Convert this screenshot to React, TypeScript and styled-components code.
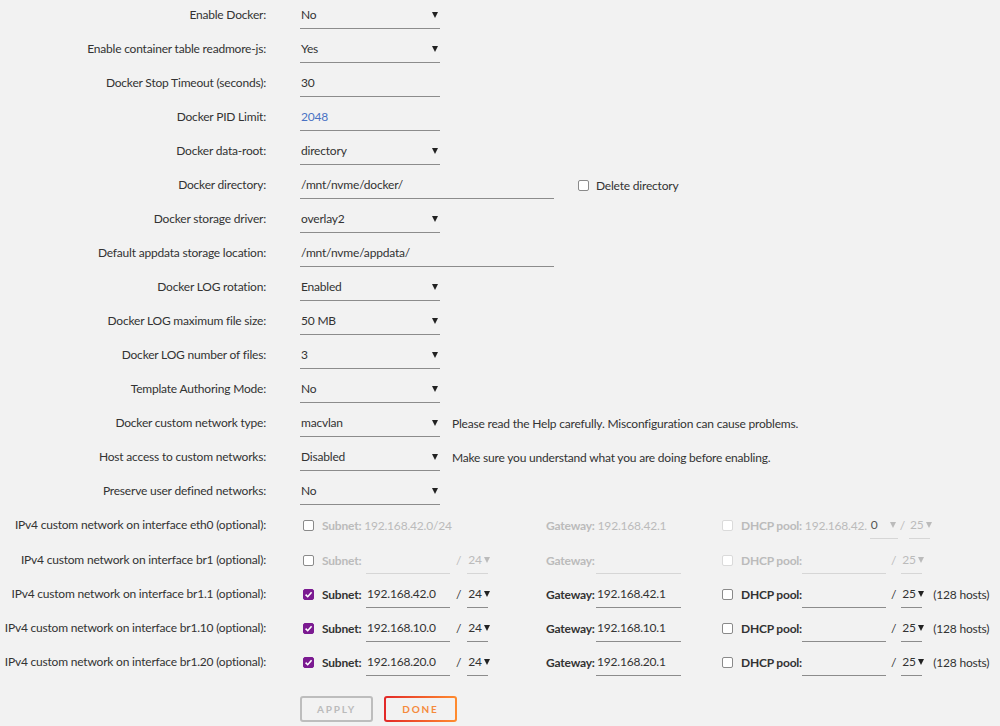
import React from "react";
import styled, { createGlobalStyle } from "styled-components";

const GlobalStyle = createGlobalStyle`
  body {
    margin: 0;
    background: #f2f2f2;
    font-family: Lato, "Liberation Sans", sans-serif;
    font-size: 12px;
    letter-spacing: -0.2px;
    color: #333;
  }
`;

const Form = styled.div`
  padding-top: 1px;
  width: 1000px;
`;

const Row = styled.div<{ $extra?: boolean }>`
  display: flex;
  align-items: flex-start;
  height: 34px;
  margin-top: ${(p) => (p.$extra ? "1px" : "0")};
`;

const Label = styled.div`
  flex: none;
  width: 266px;
  padding-right: 34px;
  text-align: right;
  line-height: 28px;
  white-space: nowrap;
`;

const Value = styled.div`
  display: flex;
  align-items: center;
  height: 28px;
`;

const Field = styled.div<{ $w: number; $muted?: boolean; $blue?: boolean }>`
  box-sizing: border-box;
  flex: none;
  width: ${(p) => p.$w}px;
  height: 28px;
  display: flex;
  align-items: center;
  justify-content: space-between;
  padding: 0 2px 0 1px;
  border-bottom: 1px solid ${(p) => (p.$muted ? "#d6d6d6" : "#8c8c8c")};
  color: ${(p) => (p.$blue ? "#4a72c4" : p.$muted ? "#bbb" : "#333")};
  white-space: nowrap;
`;

const Arrow = styled.span<{ $muted?: boolean }>`
  display: inline-block;
  width: 0;
  height: 0;
  border-left: 3px solid transparent;
  border-right: 3px solid transparent;
  border-top: 6px solid ${(p) => (p.$muted ? "#bbb" : "#222")};
  margin-left: 2px;
`;

const Note = styled.span`
  margin-left: 12px;
  white-space: nowrap;
`;

const Box = styled.span<{ $checked?: boolean; $muted?: boolean }>`
  box-sizing: border-box;
  width: 11px;
  height: 11px;
  border-radius: 2px;
  border: 1px solid ${(p) => (p.$checked ? "#7b1a91" : p.$muted ? "#dadada" : "#8a8a8a")};
  background: ${(p) => (p.$checked ? "#7b1a91" : "#fff")};
  display: inline-flex;
  align-items: center;
  justify-content: center;
  flex: none;
`;

const Check = ({ checked, muted }: { checked?: boolean; muted?: boolean }) => (
  <Box $checked={checked} $muted={muted}>
    {checked && (
      <svg width="9" height="9" viewBox="0 0 9 9">
        <path d="M1.6 4.6 L3.7 6.7 L7.6 2.2" stroke="#fff" strokeWidth="1.6" fill="none" />
      </svg>
    )}
  </Box>
);

const CheckLabel = styled.label`
  display: flex;
  align-items: center;
  gap: 7px;
  margin-left: 24px;
`;

const NetGrid = styled.div`
  display: grid;
  grid-template-columns: 246px 176px auto;
  align-items: center;
  height: 28px;
`;

const Group = styled.div<{ $muted?: boolean }>`
  display: flex;
  align-items: center;
  height: 28px;
  color: ${(p) => (p.$muted ? "#bbb" : "#333")};
  white-space: nowrap;
`;

const Bold = styled.span<{ $w?: number }>`
  font-weight: 700;
  ${(p) => (p.$w ? `width: ${p.$w}px;` : "")}
  flex: none;
`;

const Slash = styled.span<{ $l: number; $r: number }>`
  margin: 0 ${(p) => p.$r}px 0 ${(p) => p.$l}px;
`;

const CheckSlot = styled.span<{ $l: number }>`
  display: inline-flex;
  margin-left: ${(p) => p.$l}px;
  margin-right: 8px;
`;

const Hosts = styled.span`
  margin-left: 11px;
`;

const Buttons = styled.div`
  display: flex;
  gap: 11px;
  margin: 14px 0 0 300px;
`;

const Button = styled.button<{ $kind: "apply" | "done" }>`
  box-sizing: border-box;
  width: 73px;
  height: 26px;
  border-radius: 3px;
  font-family: Lato, "Liberation Sans", sans-serif;
  font-size: 10px;
  font-weight: 700;
  letter-spacing: 1.8px;
  text-transform: uppercase;
  cursor: pointer;
  border: 2px solid ${(p) => (p.$kind === "apply" ? "#bdbdbd" : "transparent")};
  color: ${(p) => (p.$kind === "apply" ? "#bbb" : "#f58a3c")};
  background: ${(p) =>
    p.$kind === "apply"
      ? "#f2f2f2"
      : "linear-gradient(#f2f2f2, #f2f2f2) padding-box, linear-gradient(90deg, #e22828, #ff8c2f) border-box"};
`;

type Item = {
  label: string;
  value: string;
  kind: "select" | "input";
  w?: number;
  blue?: boolean;
  note?: string;
  check?: string;
};

const items: Item[] = [
  { label: "Enable Docker:", value: "No", kind: "select" },
  { label: "Enable container table readmore-js:", value: "Yes", kind: "select" },
  { label: "Docker Stop Timeout (seconds):", value: "30", kind: "input" },
  { label: "Docker PID Limit:", value: "2048", kind: "input", blue: true },
  { label: "Docker data-root:", value: "directory", kind: "select" },
  { label: "Docker directory:", value: "/mnt/nvme/docker/", kind: "input", w: 254, check: "Delete directory" },
  { label: "Docker storage driver:", value: "overlay2", kind: "select" },
  { label: "Default appdata storage location:", value: "/mnt/nvme/appdata/", kind: "input", w: 254 },
  { label: "Docker LOG rotation:", value: "Enabled", kind: "select" },
  { label: "Docker LOG maximum file size:", value: "50 MB", kind: "select" },
  { label: "Docker LOG number of files:", value: "3", kind: "select" },
  { label: "Template Authoring Mode:", value: "No", kind: "select" },
  {
    label: "Docker custom network type:",
    value: "macvlan",
    kind: "select",
    note: "Please read the Help carefully. Misconfiguration can cause problems.",
  },
  {
    label: "Host access to custom networks:",
    value: "Disabled",
    kind: "select",
    note: "Make sure you understand what you are doing before enabling.",
  },
  { label: "Preserve user defined networks:", value: "No", kind: "select" },
];

type Net = { iface: string; subnet: string; gateway: string };

const nets: Net[] = [
  { iface: "br1.1", subnet: "192.168.42.0", gateway: "192.168.42.1" },
  { iface: "br1.10", subnet: "192.168.10.0", gateway: "192.168.10.1" },
  { iface: "br1.20", subnet: "192.168.20.0", gateway: "192.168.20.1" },
];

const SettingRow = ({ item }: { item: Item }) => (
  <Row>
    <Label>{item.label}</Label>
    <Value>
      <Field $w={item.w ?? 140} $blue={item.blue}>
        <span>{item.value}</span>
        {item.kind === "select" && <Arrow />}
      </Field>
      {item.note && <Note>{item.note}</Note>}
      {item.check && (
        <CheckLabel>
          <Check />
          {item.check}
        </CheckLabel>
      )}
    </Value>
  </Row>
);

const NetRow = ({ net, muted }: { net?: Net; muted?: boolean }) => (
  <Row $extra={muted}>
    <Label>IPv4 custom network on interface {net ? net.iface : "br1"} (optional):</Label>
    <NetGrid>
      <Group $muted={muted}>
        <CheckSlot $l={3}>
          <Check checked={!muted} />
        </CheckSlot>
        <Bold $w={44}>Subnet:</Bold>
        <Field $w={84} $muted={muted}>
          {net?.subnet}
        </Field>
        <Slash $l={6} $r={6}>/</Slash>
        <Field $w={21} $muted={muted}>
          24
          <Arrow $muted={muted} />
        </Field>
      </Group>
      <Group $muted={muted}>
        <Bold $w={50}>Gateway:</Bold>
        <Field $w={85} $muted={muted}>
          {net?.gateway}
        </Field>
      </Group>
      <Group $muted={muted}>
        <CheckSlot $l={0}>
          <Check muted={muted} />
        </CheckSlot>
        <Bold $w={61}>DHCP pool:</Bold>
        <Field $w={84} $muted={muted} />
        <Slash $l={5} $r={5}>/</Slash>
        <Field $w={21} $muted={muted}>
          25
          <Arrow $muted={muted} />
        </Field>
        {!muted && <Hosts>(128 hosts)</Hosts>}
      </Group>
    </NetGrid>
  </Row>
);

const Eth0Row = () => (
  <Row>
    <Label>IPv4 custom network on interface eth0 (optional):</Label>
    <NetGrid>
      <Group $muted>
        <CheckSlot $l={3}>
          <Check />
        </CheckSlot>
        <Bold>Subnet:</Bold>&nbsp;192.168.42.0/24
      </Group>
      <Group $muted>
        <Bold>Gateway:</Bold>&nbsp;192.168.42.1
      </Group>
      <Group $muted>
        <CheckSlot $l={0}>
          <Check muted />
        </CheckSlot>
        <Bold>DHCP pool:</Bold>&nbsp;192.168.42.&nbsp;
        <Field $w={28} $muted>
          <span style={{ color: "#555" }}>0</span>
          <Arrow $muted />
        </Field>
        <Slash $l={2} $r={4}>/</Slash>
        <Field $w={21} $muted>
          25
          <Arrow $muted />
        </Field>
      </Group>
    </NetGrid>
  </Row>
);

export default function App() {
  return (
    <>
      <GlobalStyle />
      <Form>
        {items.map((it) => (
          <SettingRow key={it.label} item={it} />
        ))}
        <Eth0Row />
        <NetRow muted />
        {nets.map((n) => (
          <NetRow key={n.iface} net={n} />
        ))}
        <Buttons>
          <Button $kind="apply">Apply</Button>
          <Button $kind="done">Done</Button>
        </Buttons>
      </Form>
    </>
  );
}
